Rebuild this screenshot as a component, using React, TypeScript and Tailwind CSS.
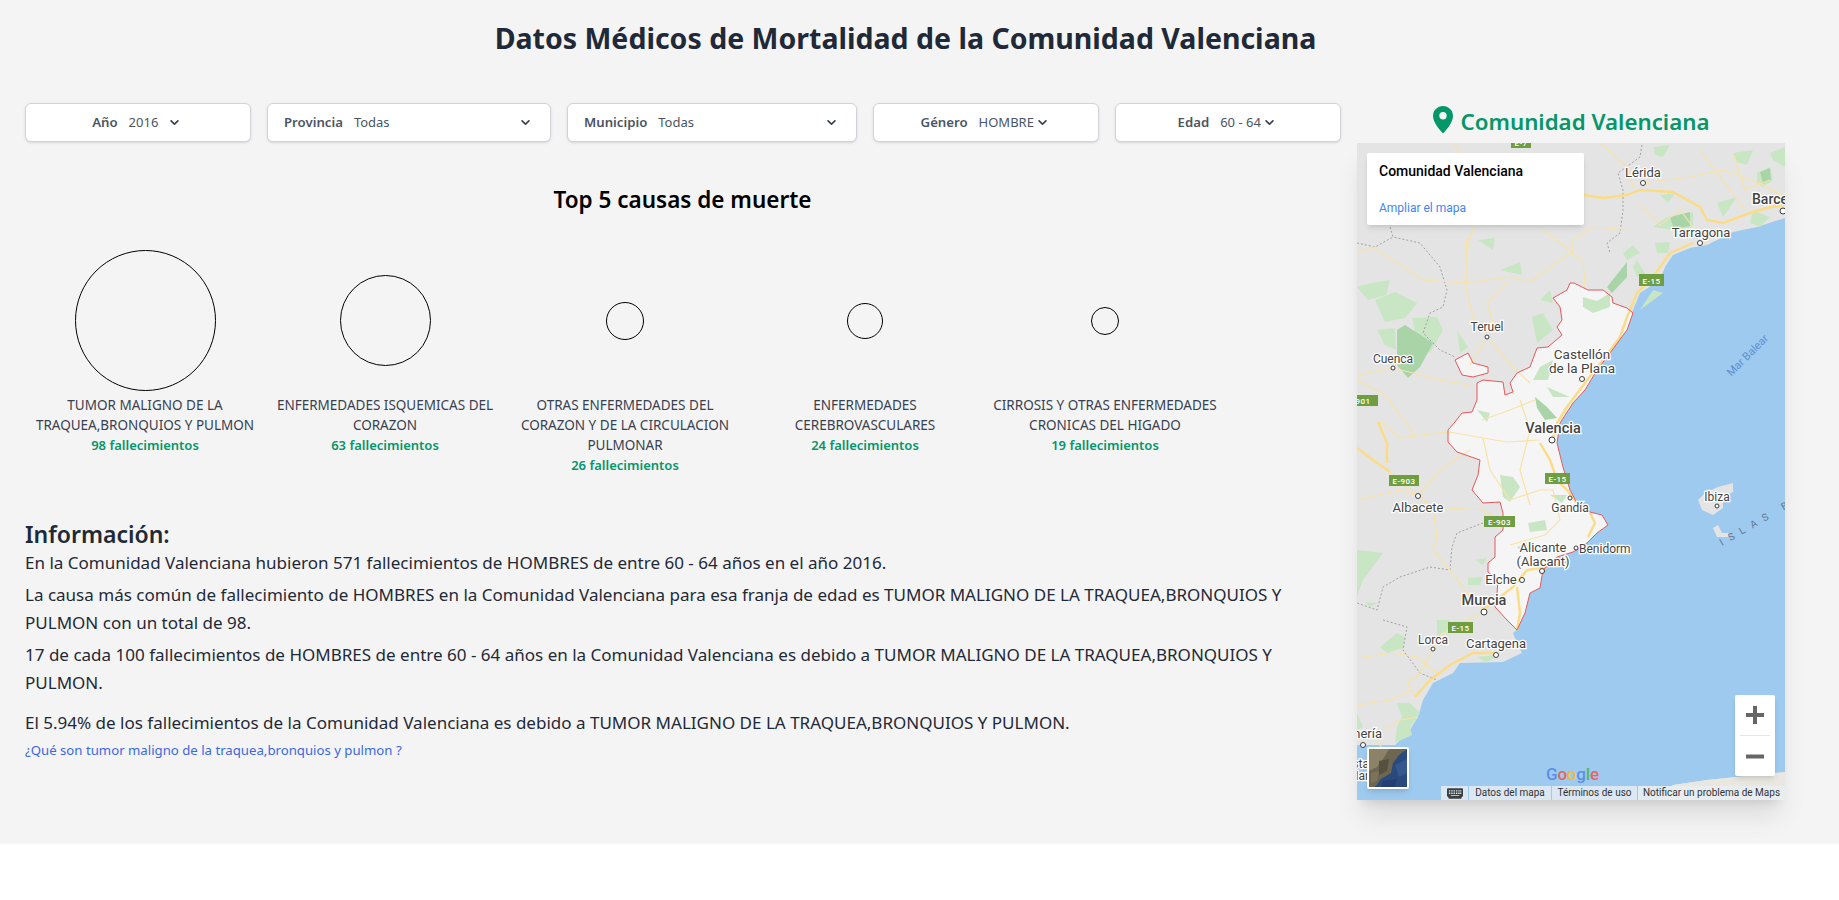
import React from "react";

const Chevron = ({ className = "" }: any) => (
  <svg viewBox="0 0 20 20" fill="currentColor" className={`w-[17px] h-[17px] text-[#374151] shrink-0 ${className}`}>
    <path
      fillRule="evenodd"
      clipRule="evenodd"
      d="M5.293 7.293a1 1 0 011.414 0L10 10.586l3.293-3.293a1 1 0 111.414 1.414l-4 4a1 1 0 01-1.414 0l-4-4a1 1 0 010-1.414z"
    />
  </svg>
);

const causes = [
  { name: "TUMOR MALIGNO DE LA TRAQUEA,BRONQUIOS Y PULMON", total: 98, size: "w-[141px] h-[141px]" },
  { name: "ENFERMEDADES ISQUEMICAS DEL CORAZON", total: 63, size: "w-[91px] h-[91px]" },
  { name: "OTRAS ENFERMEDADES DEL CORAZON Y DE LA CIRCULACION PULMONAR", total: 26, size: "w-[38px] h-[38px]" },
  { name: "ENFERMEDADES CEREBROVASCULARES", total: 24, size: "w-[36px] h-[36px]" },
  { name: "CIRROSIS Y OTRAS ENFERMEDADES CRONICAS DEL HIGADO", total: 19, size: "w-[28px] h-[28px]" },
];

const Select = ({ label, value, width, wide, chevronClass }: any) => (
  <div
    className={`${width} h-[39px] shrink-0 flex items-center rounded-md border border-[#d1d5db] bg-white shadow-sm text-[#4b5563] ${
      wide ? "pl-[16px] pr-[16px]" : "justify-center"
    }`}
  >
    <span className="text-[13.2px] font-semibold mr-[11px]">{label}</span>
    <span className={`text-[13px] ${wide ? "grow" : ""}`}>{value}</span>
    <Chevron className={chevronClass} />
  </div>
);

const roads = [
  "1584,195 1603,198 1627,195 1640,190 1673,192 1700,207 1707,220 1723,223 1750,213 1770,207 1785,205",
  "1693,243 1670,253 1653,277 1637,293 1627,317 1620,337 1603,360 1587,380 1582,387 1567,407 1557,423 1553,438",
  "1540,443 1550,460 1557,480 1567,490 1577,503 1590,513 1595,523 1588,537",
  "1378,422 1387,443 1387,463",
  "1357,448 1373,460 1390,472",
  "1497,653 1473,653 1450,665 1430,680 1415,697",
  "1483,610 1513,587 1527,570 1547,567",
  "1517,587 1520,613 1517,630",
];

const thinRoads = [
  "1643,183 1690,177 1723,170 1760,183 1785,197",
  "1540,440 1507,442 1483,438 1450,432 1437,433 1400,438 1383,423 1378,422",
  "1390,472 1417,495 1433,507 1483,510 1500,520",
  "1433,507 1437,537 1433,550 1450,570 1467,593 1483,610",
  "1357,658 1393,653 1417,657 1437,673",
  "1467,237 1465,283 1473,317 1487,337 1513,367 1530,383",
  "1465,283 1423,280 1373,247 1357,253",
  "1510,280 1487,303 1493,323",
  "1465,283 1510,277 1530,282 1570,253 1583,260 1585,287",
  "1573,253 1573,240 1593,227 1630,230",
  "1543,230 1573,253",
  "1473,228 1467,250 1467,283",
  "1453,143 1463,155",
  "1600,143 1627,167 1633,187",
  "1700,150 1730,190 1745,210",
  "1357,380 1385,395 1415,435",
  "1483,438 1490,470 1510,500 1540,490 1553,490 1560,520 1545,535 1510,545",
  "1433,649 1440,635 1483,612",
  "1433,649 1420,673 1408,683 1415,697",
  "1357,500 1400,490 1418,496 1440,470 1470,450",
  "1384,730 1400,720 1418,717",
  "1393,368 1357,375",
  "1393,368 1440,380 1470,385",
  "1487,337 1470,365",
  "1390,180 1400,230",
  "1640,205 1660,225 1680,210 1707,245",
  "1733,153 1745,190 1770,180",
  "1520,400 1530,430 1520,470 1530,505",
  "1482,420 1510,410 1535,400",
  "1357,705 1390,700 1410,690",
  "1390,760 1370,730",
];

const borders = [
  "1642,145 1640,157 1618,173 1623,190 1623,210 1620,233 1607,243 1610,253",
  "1390,227 1393,237 1420,243 1440,267 1447,290 1443,307 1430,313 1423,333 1440,350 1455,357",
  "1357,243 1375,247 1393,237",
  "1483,523 1457,533 1452,547 1450,570 1430,567 1400,577 1383,587 1377,610 1357,603",
  "1383,620 1407,627 1403,650 1420,673 1437,680",
];

const greens = [
  "1757,173 1770,167 1773,180 1763,187 1757,183",
  "1733,153 1753,150 1747,165 1737,162",
  "1770,153 1785,147 1785,167 1773,160",
  "1653,147 1670,145 1663,157 1655,155",
  "1667,217 1693,212 1693,227 1673,230 1653,227 1660,222",
  "1655,243 1670,242 1668,253 1657,253",
  "1633,245 1640,253 1627,260 1623,253",
  "1717,203 1737,197 1723,217",
  "1753,210 1770,217 1760,227 1750,223",
  "1637,260 1647,277 1637,277 1633,267",
  "1653,290 1663,293 1640,310",
  "1583,297 1597,301 1610,293 1610,307 1593,313 1583,307",
  "1532,317 1543,313 1553,330 1537,343",
  "1540,367 1553,360 1548,380 1533,380",
  "1547,387 1570,397 1553,397",
  "1357,287 1372,283 1390,280 1386,295 1368,300",
  "1375,300 1395,292 1417,303 1405,318 1385,322",
  "1412,318 1437,317 1443,330 1430,353 1418,345",
  "1377,330 1395,328 1396,350 1385,345",
  "1457,330 1468,347 1460,353",
  "1477,410 1490,413 1487,422",
  "1500,475 1513,477 1520,487 1510,502 1503,497",
  "1528,523 1545,520 1547,530 1530,532",
  "1550,495 1567,495 1562,503",
  "1517,547 1527,543 1523,553",
  "1475,560 1487,558 1483,565",
  "1468,578 1483,577 1480,585 1468,585",
  "1357,550 1383,553 1363,580 1357,597",
  "1365,602 1378,603 1370,607",
  "1437,620 1450,620 1447,630 1437,630",
  "1380,647 1397,633 1405,637 1403,648 1387,653",
  "1437,627 1447,623 1447,633 1437,635",
  "1477,657 1497,655 1487,663",
  "1397,703 1410,703 1420,713 1410,727 1412,735 1395,743 1397,727 1402,717",
  "1357,713 1363,727 1357,730",
  "1540,300 1550,290 1553,303",
  "1478,240 1495,238 1493,250",
  "1500,270 1520,262 1522,275",
  "1660,195 1675,193 1668,203",
];

const darkGreens = [
  "1397,330 1405,325 1433,343 1420,367 1408,378 1397,365",
  "1627,262 1607,287 1612,293 1627,277",
  "1535,397 1547,407 1557,418 1545,420 1537,408",
  "1670,217 1690,212 1690,226 1674,229",
  "1760,172 1770,168 1771,180 1763,184",
];

const shields = [
  { x: 1511, y: 138, w: 20, h: 10, t: "E-7" },
  { x: 1639, y: 274, w: 25, h: 12, t: "E-15" },
  { x: 1340, y: 395, w: 38, h: 11, t: "E-901" },
  { x: 1389, y: 475, w: 30, h: 11, t: "E-903" },
  { x: 1545, y: 473, w: 25, h: 11, t: "E-15" },
  { x: 1484, y: 516, w: 31, h: 11, t: "E-903" },
  { x: 1448, y: 622, w: 25, h: 11, t: "E-15" },
];

const dots = [
  [1643, 183, 2.5], [1783, 211, 3], [1700, 243, 2.5], [1487, 337, 2], [1393, 368, 2],
  [1582, 379, 2.5], [1552, 440, 3], [1418, 496, 2.5], [1570, 498, 2], [1576, 548, 2],
  [1542, 571, 2.5], [1522, 580, 2.5], [1484, 612, 3], [1717, 506, 2], [1433, 649, 2],
  [1496, 655, 2.5], [1363, 745, 2.5],
];

const labels = [
  { x: 1643, y: 177, t: "Lérida", s: 13 },
  { x: 1752, y: 204, t: "Barcelona", s: 14, w: 500, a: "start" },
  { x: 1701, y: 237, t: "Tarragona", s: 13 },
  { x: 1487, y: 331, t: "Teruel", s: 12 },
  { x: 1393, y: 363, t: "Cuenca", s: 12 },
  { x: 1582, y: 359, t: "Castellón", s: 13.5 },
  { x: 1582, y: 373, t: "de la Plana", s: 13.5 },
  { x: 1553, y: 433, t: "Valencia", s: 14.5, w: 500 },
  { x: 1418, y: 512, t: "Albacete", s: 13 },
  { x: 1570, y: 512, t: "Gandía", s: 12 },
  { x: 1543, y: 552, t: "Alicante", s: 13 },
  { x: 1543, y: 566, t: "(Alacant)", s: 13 },
  { x: 1579, y: 553, t: "Benidorm", s: 12, a: "start" },
  { x: 1501, y: 584, t: "Elche", s: 13 },
  { x: 1484, y: 605, t: "Murcia", s: 14.5, w: 500 },
  { x: 1717, y: 501, t: "Ibiza", s: 12 },
  { x: 1433, y: 644, t: "Lorca", s: 12 },
  { x: 1496, y: 648, t: "Cartagena", s: 13 },
  { x: 1382, y: 738, t: "Almería", s: 13, a: "end" },
  { x: 1369, y: 768, t: "Costa", s: 12, a: "end" },
  { x: 1369, y: 780, t: "Mar", s: 12, a: "end" },
];

const MapCanvas = () => (
  <svg viewBox="1357 143 428 657" className="absolute inset-0 w-full h-full">
    <rect x="1357" y="143" width="428" height="657" fill="#e4e4e4" />
    <polygon
      points="1785,218 1757,227 1733,232 1707,245 1690,248 1673,255 1665,267 1660,280 1640,293 1633,310 1627,330 1610,353 1597,370 1585,390 1573,403 1560,423 1557,443 1563,467 1570,490 1578,505 1590,512 1602,515 1608,525 1597,533 1587,543 1573,552 1557,557 1543,570 1540,588 1530,593 1525,613 1517,630 1513,633 1517,643 1522,653 1503,662 1460,663 1453,673 1433,683 1423,700 1418,717 1408,733 1395,745 1357,745 1357,800 1657,800 1673,785 1707,780 1785,772"
      fill="#9dcaee"
    />
    <polygon points="1657,800 1673,785 1707,780 1785,772 1785,800" fill="#e9e7e0" />
    <polygon
      points="1570,283 1574,283 1588,290 1603,290 1612,297 1613,303 1627,308 1633,313 1627,330 1610,353 1597,370 1585,390 1573,403 1560,423 1557,443 1563,467 1570,490 1578,505 1590,512 1602,515 1608,525 1597,533 1587,543 1573,552 1557,557 1543,570 1540,588 1530,593 1525,613 1517,630 1507,620 1495,607 1497,593 1498,580 1488,572 1488,563 1495,557 1495,537 1503,530 1503,513 1500,502 1483,503 1472,490 1478,475 1480,460 1457,452 1448,442 1448,430 1455,422 1462,413 1472,412 1477,400 1477,383 1483,380 1503,382 1505,395 1513,392 1510,383 1517,373 1530,367 1537,348 1548,347 1562,335 1557,327 1562,320 1560,307 1553,298 1567,290"
      fill="#f5f5f5"
    />
    <polygon points="1455,360 1468,353 1473,363 1488,367 1488,373 1473,377 1462,375" fill="#f5f5f5" />
    <polygon points="1698,500 1705,493 1718,487 1733,483 1733,492 1723,497 1723,508 1713,515 1702,510" fill="#e4e4e4" />
    <polygon points="1713,528 1718,525 1722,533 1728,533 1730,537 1717,537" fill="#e4e4e4" />
    {greens.map((p) => (
      <polygon key={p} points={p} fill="#c8e6c4" />
    ))}
    {darkGreens.map((p) => (
      <polygon key={p} points={p} fill="#a9d4a7" />
    ))}
    {borders.map((p) => (
      <polyline key={p} points={p} fill="none" stroke="#a0a0a0" strokeWidth="1" strokeDasharray="2 2" />
    ))}
    {thinRoads.map((p) => (
      <polyline key={p} points={p} fill="none" stroke="#f8e3a6" strokeWidth="1.2" />
    ))}
    {roads.map((p) => (
      <polyline key={p} points={p} fill="none" stroke="#fbdc85" strokeWidth="2.4" />
    ))}
    <polygon
      points="1570,283 1574,283 1588,290 1603,290 1612,297 1613,303 1627,308 1633,313 1627,330 1610,353 1597,370 1585,390 1573,403 1560,423 1557,443 1563,467 1570,490 1578,505 1590,512 1602,515 1608,525 1597,533 1587,543 1573,552 1557,557 1543,570 1540,588 1530,593 1525,613 1517,630 1507,620 1495,607 1497,593 1498,580 1488,572 1488,563 1495,557 1495,537 1503,530 1503,513 1500,502 1483,503 1472,490 1478,475 1480,460 1457,452 1448,442 1448,430 1455,422 1462,413 1472,412 1477,400 1477,383 1483,380 1503,382 1505,395 1513,392 1510,383 1517,373 1530,367 1537,348 1548,347 1562,335 1557,327 1562,320 1560,307 1553,298 1567,290"
      fill="none"
      stroke="#e8575a"
      strokeWidth="1"
    />
    <polygon
      points="1455,360 1468,353 1473,363 1488,367 1488,373 1473,377 1462,375"
      fill="none"
      stroke="#e8575a"
      strokeWidth="1"
    />
    {shields.map((s) => (
      <g key={s.x + "-" + s.y}>
        <rect x={s.x} y={s.y} width={s.w} height={s.h} fill="#6f9e41" />
        <text
          x={s.x + s.w / 2}
          y={s.y + s.h - 2.5}
          textAnchor="middle"
          fontFamily="Roboto, sans-serif"
          fontSize="8"
          fontWeight="500"
          letterSpacing="0.4"
          fill="#ffffff"
        >
          {s.t}
        </text>
      </g>
    ))}
    {dots.map(([x, y, r]) => (
      <circle key={x + "-" + y} cx={x} cy={y} r={r} fill="#ffffff" stroke="#3c3c3c" strokeWidth="1" />
    ))}
    {labels.map((l) => (
      <text
        key={l.t}
        x={l.x}
        y={l.y}
        textAnchor={l.a || "middle"}
        fontFamily="Roboto, sans-serif"
        fontSize={l.s}
        fontWeight={l.w || 400}
        fill="#444444"
        stroke="#ffffff"
        strokeWidth="2.5"
        paintOrder="stroke"
      >
        {l.t}
      </text>
    ))}
    <text
      x="1750"
      y="358"
      transform="rotate(-45 1750 358)"
      textAnchor="middle"
      fontFamily="Roboto, sans-serif"
      fontSize="11"
      fill="#5a8fd3"
    >
      Mar Balear
    </text>
    <text
      x="1722"
      y="546"
      transform="rotate(-30 1722 546)"
      fontFamily="Roboto, sans-serif"
      fontSize="10"
      letterSpacing="7"
      fill="#66788f"
    >
      ISLAS BALEARES
    </text>
  </svg>
);

const Satellite = () => (
  <svg viewBox="0 0 38 38" className="w-full h-full block">
    <rect width="38" height="38" fill="#2a4a7e" />
    <polygon points="0,0 38,0 30,6 24,14 22,24 12,30 6,38 0,38" fill="#6d6650" />
    <polygon points="0,0 20,0 14,10 8,18 0,22" fill="#8b8268" />
    <polygon points="10,12 20,10 18,22 10,26" fill="#55503f" />
    <polygon points="2,24 10,22 8,32 2,34" fill="#7c7459" />
    <polygon points="26,16 38,10 38,24 30,28" fill="#35588f" />
    <polygon points="14,32 28,30 26,38 12,38" fill="#223f70" />
  </svg>
);

const KeyboardIcon = () => (
  <svg viewBox="0 0 17 11" className="w-[16px] h-[11px]" fill="#3c4043">
    <path d="M1 0h15a1 1 0 011 1v7a1 1 0 01-1 1l-1 2H2L1 9a1 1 0 01-1-1V1a1 1 0 011-1z" />
    <path
      fill="#dbe8f4"
      d="M2 2h1.5v1.5H2zM4.5 2H6v1.5H4.5zM7 2h1.500v1.500H7zM9.500 2H11v1.500H9.500zM12 2h1.500v1.500H12zM14 2h1.200v1.500H14zM2 4.500h1.500V6H2zM4.500 4.500H6V6H4.500zM7 4.500h1.500V6H7zM9.500 4.500H11V6H9.500zM12 4.500h1.500V6H12zM14 4.500h1.200V6H14zM4 7h9v1H4z"
    />
  </svg>
);

const MapBox = () => (
  <div className="relative w-[428px] h-[657px] overflow-hidden shadow-xl font-['Roboto',sans-serif]">
    <MapCanvas />
    <div className="absolute left-[10px] top-[10px] w-[217px] h-[72px] bg-white rounded-[2px] shadow-md px-[12px] py-[9px]">
      <div className="text-[14px] leading-[18px] font-medium text-black">Comunidad Valenciana</div>
      <div className="text-[12px] leading-[16px] mt-[20px] text-[#4285f4]">Ampliar el mapa</div>
    </div>
    <div className="absolute left-[10px] top-[604px] w-[42px] h-[42px] border-2 border-white rounded-[2px] shadow-md">
      <Satellite />
    </div>
    <div className="absolute left-[378px] top-[552px] w-[40px] h-[81px] bg-white rounded-[2px] shadow-md flex flex-col items-center">
      <div className="h-[40px] flex items-center justify-center">
        <svg viewBox="0 0 18 18" className="w-[18px] h-[18px]" fill="#666666">
          <path d="M7 0h4v7h7v4h-7v7H7v-7H0V7h7z" />
        </svg>
      </div>
      <div className="w-[30px] h-px bg-[#e6e6e6]" />
      <div className="h-[40px] flex items-center justify-center">
        <svg viewBox="0 0 18 4" className="w-[18px] h-[5px]" fill="#666666">
          <path d="M0 0h18v4H0z" />
        </svg>
      </div>
    </div>
    <div className="absolute left-[189px] top-[622px] text-[17px] leading-[18px] font-medium tracking-[-0.2px]">
      <span className="text-[#5d8fe8]">G</span>
      <span className="text-[#e8655a]">o</span>
      <span className="text-[#f0bc3c]">o</span>
      <span className="text-[#5d8fe8]">g</span>
      <span className="text-[#58b56b]">l</span>
      <span className="text-[#e8655a]">e</span>
    </div>
    <div className="absolute right-0 bottom-0 left-[84px] h-[14px] flex text-[10px] leading-[14px] text-[#333333]">
      <div className="w-[27px] bg-[#dbe8f4] flex items-center justify-center">
        <KeyboardIcon />
      </div>
      <div className="w-[82px] ml-px bg-[#dbe8f4] text-center">Datos del mapa</div>
      <div className="w-[85px] ml-px bg-[#dbe8f4] text-center">Términos de uso</div>
      <div className="grow ml-px bg-[#e8eef2]/90 text-center whitespace-nowrap">Notificar un problema de Maps</div>
    </div>
  </div>
);

export default function App() {
  return (
    <div className="h-[844px] bg-[#f4f4f4] font-['Noto_Sans',sans-serif]">
      <h1 className="pt-[20px] h-[103px] pl-[25px] pr-[53px] text-center text-[28.5px] leading-[36px] font-bold text-[#1f2937]">
        Datos Médicos de Mortalidad de la Comunidad Valenciana
      </h1>
      <div className="flex pl-[25px]">
        <div className="w-[1315px] shrink-0">
          <div className="flex gap-[16.5px]">
            <Select label="Año" value="2016" width="w-[225.5px]" chevronClass="ml-[8px]" />
            <Select label="Provincia" value="Todas" width="w-[283.5px]" wide />
            <Select label="Municipio" value="Todas" width="w-[289.5px]" wide />
            <Select label="Género" value="HOMBRE" width="w-[225.5px]" />
            <Select label="Edad" value="60 - 64" width="w-[225.5px]" />
          </div>
          <h2 className="mt-[42px] text-center text-[22.5px] leading-[32px] font-semibold text-black">
            Top 5 causas de muerte
          </h2>
          <div className="flex mt-[34px]">
            {causes.map((c) => (
              <div key={c.name} className="w-[240px] shrink-0 px-[6px] text-center text-[13.5px] leading-[20px]">
                <div className="h-[141px] mb-[4px] flex items-center justify-center">
                  <div className={`${c.size} rounded-full border border-black`} />
                </div>
                <div className="text-[#374151]">{c.name}</div>
                <div className="text-[13px] font-semibold text-[#059669]">{c.total} fallecimientos</div>
              </div>
            ))}
          </div>
          <div className="mt-[43px] w-[1290px] text-[17.03px] leading-[28px] text-[#1f2937]">
            <h3 className="text-[23px] leading-[32px] font-semibold">Información:</h3>
            <p className="-mt-[1px]">
              En la Comunidad Valenciana hubieron 571 fallecimientos de HOMBRES de entre 60 - 64 años en el año 2016.
            </p>
            <p className="mt-[4px]">
              La causa más común de fallecimiento de HOMBRES en la Comunidad Valenciana para esa franja de edad es TUMOR
              MALIGNO DE LA TRAQUEA,BRONQUIOS Y PULMON con un total de 98.
            </p>
            <p className="mt-[4px]">
              17 de cada 100 fallecimientos de HOMBRES de entre 60 - 64 años en la Comunidad Valenciana es debido a TUMOR
              MALIGNO DE LA TRAQUEA,BRONQUIOS Y PULMON.
            </p>
            <p className="mt-[12px]">
              El 5.94% de los fallecimientos de la Comunidad Valenciana es debido a TUMOR MALIGNO DE LA TRAQUEA,BRONQUIOS
              Y PULMON.
            </p>
            <a className="block text-[13.2px] leading-[20px] text-[#3b68e8] mt-[3px]">
              ¿Qué son tumor maligno de la traquea,bronquios y pulmon ?
            </a>
          </div>
        </div>
        <div className="w-[428px] ml-[17px] shrink-0 -mt-[3px]">
          <div className="h-[43px] flex items-center justify-center text-[22.3px] font-semibold text-[#059669]">
            <svg viewBox="0 0 20 28" className="w-[20px] h-[28px] mr-[8px] -mt-[4px]" fill="#059669">
              <path
                fillRule="evenodd"
                d="M10 0C4.500 0 0 4.400 0 9.900 0 16 6 23 10 27.500 14 23 20 16 20 9.900 20 4.400 15.500 0 10 0zm0 13.400a3.700 3.700 0 110-7.400 3.700 3.700 0 010 7.400z"
              />
            </svg>
            Comunidad Valenciana
          </div>
          <MapBox />
        </div>
      </div>
    </div>
  );
}
